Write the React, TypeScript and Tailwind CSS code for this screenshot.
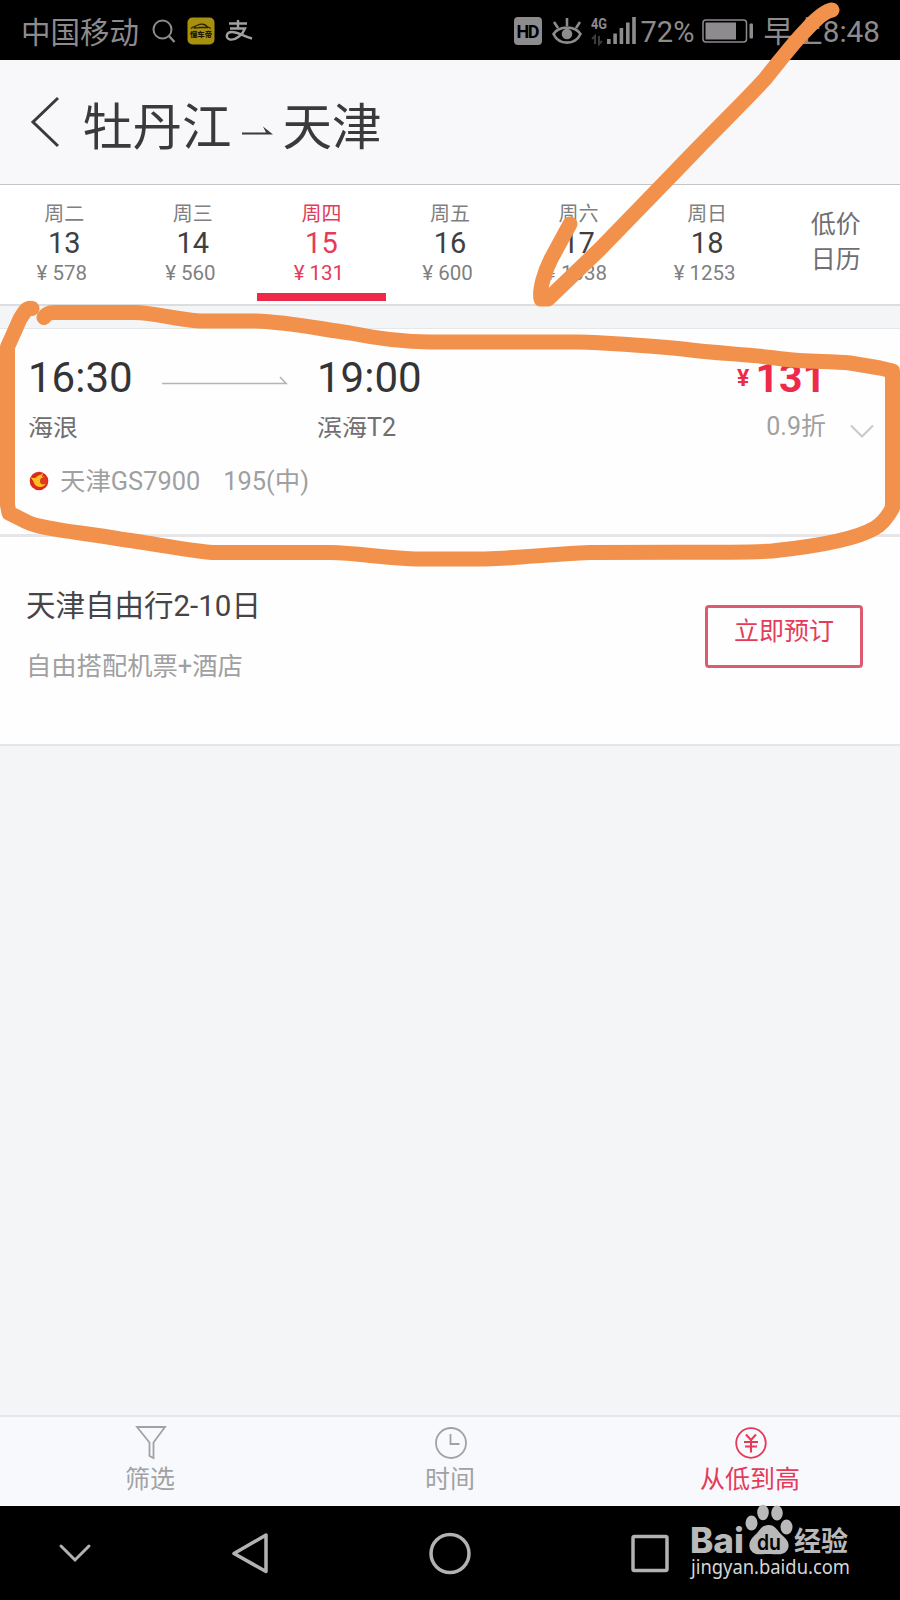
const days = [
  { week: "周二", day: "13", price: "578" },
  { week: "周三", day: "14", price: "560" },
  { week: "周四", day: "15", price: "131", active: true },
  { week: "周五", day: "16", price: "600" },
  { week: "周六", day: "17", price: "1038" },
  { week: "周日", day: "18", price: "1253" },
];

function StatusBar() {
  return (
    <div className="flex h-[60px] items-center justify-between bg-black pr-[20px] pl-[21px] pt-[2px] text-[29px] leading-[56px] text-[#8e8b8e]">
      <div className="flex items-center">
        <span className="pt-[3px] text-[29.5px]">中国移动</span>
        <svg className="ml-[13px]" width="24" height="24" viewBox="0 0 24 24" fill="none" stroke="currentColor" strokeWidth="2">
          <circle cx="10.5" cy="10.5" r="9" />
          <path d="M17 17L22.500 23" strokeWidth="2.4" />
        </svg>
        <svg className="ml-[11px]" width="28" height="28" viewBox="0 0 28 28">
          <rect x="0.500" y="0.500" width="27" height="27" rx="5" fill="#a8900f" />
          <path d="M4 11.500C7 9 8 10 11 8C14 6.500 18 7 20 9.500L24 11.500M7 11.500C9 9.500 10 12 12 10.500H21" fill="none" stroke="#2a2405" strokeWidth="1.300" />
          <text x="14" y="19.800" textAnchor="middle" fontSize="7.300" fontWeight="900" fill="#1d1903">懂车帝</text>
        </svg>
        <svg className="ml-[10px]" width="28" height="24" viewBox="0 0 28 24" fill="none" stroke="#a19fa1" strokeWidth="2.400">
          <path d="M4 4.500H22M13 1V9.500M5 9.500H20C18 15 11 21.500 5 20.500C0 19.500 1 13 7 13C13 13 19 17.500 27 19.500" />
        </svg>
      </div>

      <div className="flex items-center">
        <svg width="28" height="28" viewBox="0 0 28 28">
          <rect width="28" height="28" rx="4" fill="#8e8b8e" />
          <text x="14" y="20.500" textAnchor="middle" fontSize="18" fontWeight="700" textLength="23" fill="#000">HD</text>
        </svg>
        <svg className="ml-[10px]" width="30" height="28" viewBox="0 0 30 28" fill="none" stroke="currentColor" strokeWidth="2.600">
          <path d="M1.500 17C7 8.500 23 8.500 28.500 17C23 28.500 7 28.500 1.500 17Z" />
          <path d="M15 1V9M2 5L6 11M28 5L24 11" />
          <circle cx="15" cy="17" r="5.300" fill="currentColor" stroke="none" />
        </svg>
        <svg className="ml-[9px] overflow-visible" width="46" height="28" viewBox="0 0 46 28" fill="currentColor">
          <text x="0" y="11.500" fontSize="15" fontWeight="700" textLength="16" lengthAdjust="spacingAndGlyphs">4G</text>
          <path d="M4 27V19L1 22M8 19V27L11 24" fill="none" stroke="#3c3a3c" strokeWidth="2" />
          <rect x="16" y="22" width="3.600" height="5" />
          <rect x="22.300" y="16.500" width="3.600" height="10.500" />
          <rect x="28.600" y="11" width="3.600" height="16" />
          <rect x="35" y="5.500" width="3.600" height="21.500" />
          <rect x="41.200" y="0" width="3.600" height="27" />
        </svg>
        <span className="ml-[4px] pt-[1px]">72%</span>
        <svg className="ml-[8px]" width="52" height="24" viewBox="0 0 52 24">
          <rect x="1" y="1" width="43.500" height="22" rx="3" fill="none" stroke="#8e8b8e" strokeWidth="1.500" />
          <rect x="3.500" y="3.500" width="30.500" height="17" fill="#8e8b8e" />
          <rect x="47.500" y="4.500" width="3.500" height="15" rx="1" fill="#8e8b8e" />
        </svg>
        <span className="ml-[9px] pt-[1px] text-[29.7px]">早上8:48</span>
      </div>
    </div>
  );
}

function Header() {
  return (
    <header className="flex h-[125px] items-center border-b border-[#c4c4c6] bg-[#f8f7fa] pl-[30px] text-[49.5px] leading-[60px] text-[#3a393c]">
      <svg width="32" height="54" viewBox="0 0 32 54" fill="none" stroke="currentColor" strokeWidth="3">
        <path d="M28 3L3 27L28 51" />
      </svg>
      <span className="ml-[21px] pt-[12px]">牡丹江</span>
      <svg className="mt-[18px] ml-[10px]" width="32" height="12" viewBox="0 0 32 12">
        <path d="M0 7.500H24L21 1.500L31 9.500H0Z" fill="currentColor" />
      </svg>
      <span className="ml-[9px] pt-[12px]">天津</span>
    </header>
  );
}

function DateBar() {
  return (
    <div className="grid h-[121px] grid-cols-7 border-b-2 border-[#dcdde0] bg-white">
      {days.map((item) => (
        <div
          key={item.day}
          className={`flex flex-col items-center pt-[16px] ${item.active ? "text-[#e53b5a]" : "text-[#7f7f81]"}`}
        >
          <span className="text-[20px] leading-[27px]">{item.week}</span>
          <span className={`text-[29px] leading-[31px] ${item.active ? "" : "text-[#3f3e41]"}`}>{item.day}</span>
          <span className="mr-[5px] text-[20.5px] leading-[29px]">¥ {item.price}</span>
          {item.active && <div className="mt-[5px] h-[8px] w-full bg-[#ee2a4b]"></div>}
        </div>
      ))}
      <div className="flex flex-col items-center pt-[22px] text-[25px] leading-[35px] text-[#6f6e71]">
        <span>低价</span>
        <span>日历</span>
      </div>
    </div>
  );
}

function FlightCard() {
  return (
    <section className="h-[208px] border-b-3 border-[#e6e6e9] bg-[#fefefe] pt-[30px] pl-[28px]">
      <div className="flex text-[#6f6e71]">
        <div className="w-[134px]">
          <div className="text-[42px] leading-[38px] text-[#343336]">16:30</div>
          <div className="mt-[20px] h-[24px] overflow-hidden text-[25px] leading-[22px]">海浪</div>
        </div>
        <svg className="mt-[16px]" width="127" height="12" viewBox="0 0 127 12" fill="none" stroke="#b5b5b7" strokeWidth="1.700">
          <path d="M0 8.500H124L118 2" />
        </svg>
        <div className="ml-[28px] w-[180px]">
          <div className="text-[42px] leading-[38px] text-[#343336]">19:00</div>
          <div className="mt-[20px] h-[24px] overflow-hidden text-[25px] leading-[22px]">滨海T2</div>
        </div>
        <div className="flex w-[329px] flex-col items-end">
          <div className="flex items-center font-bold text-[#ee2a4b]">
            <span className="pt-[2px] text-[23px] leading-[36px]">¥</span>
            <span className="ml-[6px] text-[41px] leading-[38px]">131</span>
          </div>
          <div className="mt-[14px] text-[25px] leading-[32px] text-[#a09fa1]">0.9折</div>
        </div>
        <svg className="mt-[65px] ml-[24px]" width="24" height="15" viewBox="0 0 24 15" fill="none" stroke="#c9c9cb" strokeWidth="2">
          <path d="M1 1.500L12 12.500L23 1.500" />
        </svg>
      </div>
      <div className="mt-[22px] flex items-center text-[25.4px] leading-[32px] text-[#a09fa1]">
        <svg className="ml-[1px]" width="20" height="20" viewBox="0 0 20 20">
          <circle cx="10" cy="10" r="9.300" fill="#dc2a20" />
          <path d="M1 6C5 8 6 7 8 5.500C10 4 12 4 14 2L13 6L16 5C12 8 12 11 17 13C14 17 7 17 5 12C4 9 3 8 1 6Z" fill="#fbc01f" />
          <circle cx="14.500" cy="10" r="3.500" fill="#e0391f" />
        </svg>
        <span className="ml-[11px]">天津GS7900</span>
        <span className="ml-[23px]">195(中)</span>
      </div>
    </section>
  );
}

function Promo() {
  return (
    <section className="flex h-[209px] items-start justify-between border-b-2 border-[#e4e5e7] bg-[#fefefe] pr-[37px] pl-[26px]">
      <div className="pt-[49px]">
        <h2 className="text-[29.5px] leading-[40px] text-[#454447]">天津自由行2-10日</h2>
        <p className="mt-[24px] text-[25.3px] leading-[34px] text-[#a09fa1]">自由搭配机票+酒店</p>
      </div>
      <button className="mt-[68px] h-[63px] w-[158px] rounded-[4px] border-[3px] border-[#dd5a71] pb-[9px] text-[25px] text-[#e53b5a]">
        立即预订
      </button>
    </section>
  );
}

function TabBar() {
  return (
    <div className="grid h-[91px] grid-cols-3 border-t-2 border-[#e4e6e8] bg-[#f8f9fc] text-[25px] leading-[34px] text-[#a2a2a4]">
      <div className="flex flex-col items-center pt-[8px]">
        <svg className="ml-[2px]" width="34" height="36" viewBox="0 0 34 36" fill="none" stroke="currentColor" strokeWidth="1.800">
          <path d="M3 2H31L19.500 17.500V33L15.500 31V17.500Z" />
        </svg>
        <span className="mt-[2px]">筛选</span>
      </div>
      <div className="flex flex-col items-center pt-[8px]">
        <svg width="34" height="36" viewBox="0 0 34 36" fill="none" stroke="currentColor" strokeWidth="1.800">
          <circle cx="18" cy="18" r="15" />
          <path d="M17.500 9V19H26.500" />
        </svg>
        <span className="mt-[2px]">时间</span>
      </div>
      <div className="flex flex-col items-center pt-[8px] text-[#e53b5a]">
        <svg width="34" height="36" viewBox="0 0 34 36" fill="none" stroke="currentColor" strokeWidth="1.800">
          <circle cx="18" cy="18" r="14.800" />
          <path d="M13 9.500L18 15L23 9.500M18 15V27.500M11 17H25M12 21.500H24" strokeWidth="2.100" />
        </svg>
        <span className="mt-[2px]">从低到高</span>
      </div>
    </div>
  );
}

function Watermark() {
  return (
    <svg className="absolute top-[1500px] left-[685px]" width="175" height="90" viewBox="0 0 175 90" fill="#b9b9b9">
      <text x="5" y="53" fontSize="35" fontWeight="800" fontFamily="Inter, sans-serif" textLength="54" lengthAdjust="spacingAndGlyphs">Bai</text>
      <ellipse cx="66.500" cy="23" rx="6" ry="7.600" />
      <ellipse cx="78" cy="12.500" rx="5.800" ry="7.800" />
      <ellipse cx="92" cy="13" rx="5.800" ry="7.600" />
      <ellipse cx="101.500" cy="27" rx="6" ry="7.600" />
      <path d="M83.500 25C91 25 92 31 98 36C104 41 105 46 102 50.500C98 56 92 54 83.500 54C75 54 70 56 66 50.500C63 46 64 41 69 36C75 31 76 25 83.500 25Z" />
      <text x="72" y="49.500" fontSize="22" fontWeight="600" fontFamily="Inter, sans-serif" fill="#000" textLength="24" lengthAdjust="spacingAndGlyphs">du</text>
      <text x="109" y="51" fontSize="27" fontWeight="700" fontFamily="Noto Sans CJK SC, sans-serif" textLength="54">经验</text>
      <text x="6" y="74" fontSize="20.500" fill="#d6d6d6" fontFamily="Noto Sans, sans-serif" textLength="159" lengthAdjust="spacingAndGlyphs">jingyan.baidu.com</text>
    </svg>
  );
}

function NavBar() {
  return (
    <div className="flex h-[94px] items-center bg-black">
      <svg className="ml-[57px]" width="36" height="20" viewBox="0 0 36 20" fill="none" stroke="#b3b1b3" strokeWidth="3" strokeLinecap="round">
        <path d="M4 3L18 17L32 3" />
      </svg>
      <svg className="ml-[137px]" width="42" height="46" viewBox="0 0 42 46" fill="none" stroke="#b3b1b3" strokeWidth="3.500" strokeLinejoin="round">
        <path d="M36 5V41.500L4 23.500Z" />
      </svg>
      <svg className="ml-[155px]" width="46" height="46" viewBox="0 0 46 46" fill="none" stroke="#b3b1b3" strokeWidth="3.500">
        <circle cx="23" cy="23.500" r="19" />
      </svg>
      <svg className="ml-[155px]" width="44" height="46" viewBox="0 0 44 46" fill="none" stroke="#b3b1b3" strokeWidth="3.500">
        <rect x="5" y="6.500" width="34" height="34" rx="1.500" />
      </svg>
    </div>
  );
}

/* Hand-drawn arrow and loop around the cheapest flight */
function Marker() {
  return (
    <svg
      className="pointer-events-none absolute top-0 left-0"
      width="900"
      height="1600"
      viewBox="0 0 900 1600"
      fill="none"
      stroke="#f2914b"
      strokeWidth="15"
      strokeLinecap="round"
      strokeLinejoin="round"
    >
      <path d="M832 10C825 11 815 20 806 30C795 41 786 53 765 79C745 101 720 125 695 151L667 180L600 249L548 299H541C539 289 545 271 551 259L570 224" />
      <path d="M44 317.500C46 314 49 312.500 54 312.500H135C155 313 175 319 200 321H255C290 322 320 329 350 333C375 338 400 342 430 342H577C615 343 650 346 683 349C720 354 750 354 783 359C805 362 830 361 850 363L880 368L892.500 371V508C888 516 882 524 875 528C855 540 810 547 772 551C740 553 700 552 590 552.500C550 554 520 558 485 559H415C380 558 360 553 330 552.500H213C190 551 150 543 120 539C80 532 40 529 27 522L9 513L7.500 505V347L20 319C25 311 27 307 32 308.500" />
    </svg>
  );
}

export default function App() {
  return (
    <div className="relative flex h-[1600px] w-[900px] flex-col overflow-hidden bg-[#f3f5f7] [font-family:Roboto,'Noto_Sans_CJK_SC',sans-serif]">
      <StatusBar />
      <Header />
      <DateBar />
      <div className="h-[23px] border-b border-[#e6e7e9]"></div>
      <FlightCard />
      <Promo />
      <div className="flex-1"></div>
      <TabBar />
      <NavBar />
      <Watermark />
      <Marker />
    </div>
  );
}
